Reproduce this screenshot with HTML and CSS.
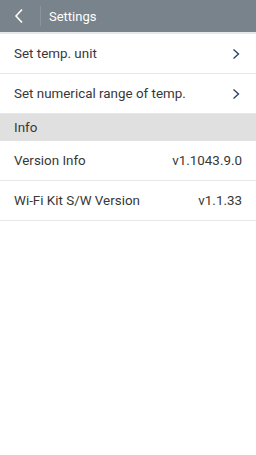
FILE: index.html
```html
<!DOCTYPE html>
<html>
  <head>
    <title>Settings</title>
    <meta name="viewport" content="width=device-width, initial-scale=1">
    <link rel="stylesheet" href="styles.css">
  </head>
  <body>
    <div class="topbar">
      <span class="back">
        <svg width="10" height="16" viewBox="0 0 10 16"><path d="M8 1.5 L2 8 L8 14.5" fill="none" stroke="#fff" stroke-width="1.6"/></svg>
      </span>
      <span class="divider"></span>
      <span class="title">Settings</span>
    </div>
    <div class="row link">
      <span>Set temp. unit</span>
      <svg class="chev" width="8" height="12" viewBox="0 0 8 12"><path d="M1.5 1.5 L6.5 6 L1.5 10.5" fill="none" stroke="#2a4468" stroke-width="1.4"/></svg>
    </div>
    <div class="row link">
      <span>Set numerical range of temp.</span>
      <svg class="chev" width="8" height="12" viewBox="0 0 8 12"><path d="M1.5 1.5 L6.5 6 L1.5 10.5" fill="none" stroke="#2a4468" stroke-width="1.4"/></svg>
    </div>
    <div class="section">Info</div>
    <div class="row">
      <span>Version Info</span>
      <span class="value">v1.1043.9.0</span>
    </div>
    <div class="row">
      <span>Wi-Fi Kit S/W Version</span>
      <span class="value">v1.1.33</span>
    </div>
  </body>
</html>
```
FILE: styles.css
```css
body{
  margin:0;
  background:#fff;
  font-family:Roboto, "Noto Sans", sans-serif;
  color:#383838;
  }
.topbar{
  height:32px;
  background:#78838b;
  border-bottom:2px solid #e6e9ec;
  display:flex;
  align-items:center;
  }
.back{
  width:40px;
  display:flex;
  justify-content:center;
  padding-right:2px;
  box-sizing:border-box;
  }
.back svg{
  display:block;
  }
.divider{
  width:1px;
  height:20px;
  background:#8a949b;
  }
.title{
  color:#fff;
  font-size:13px;
  margin-left:8px;
  }
.row{
  height:39px;
  border-bottom:1px solid #e8e8e8;
  display:flex;
  align-items:center;
  justify-content:space-between;
  padding:0 14px;
  font-size:13.4px;
  color:#383838;
  }
.row .chev{
  margin-right:2px;
  }
.section{
  height:27px;
  background:#e0e0e0;
  display:flex;
  align-items:center;
  padding:0 14px;
  font-size:13.4px;
  color:#383838;
  }
```
